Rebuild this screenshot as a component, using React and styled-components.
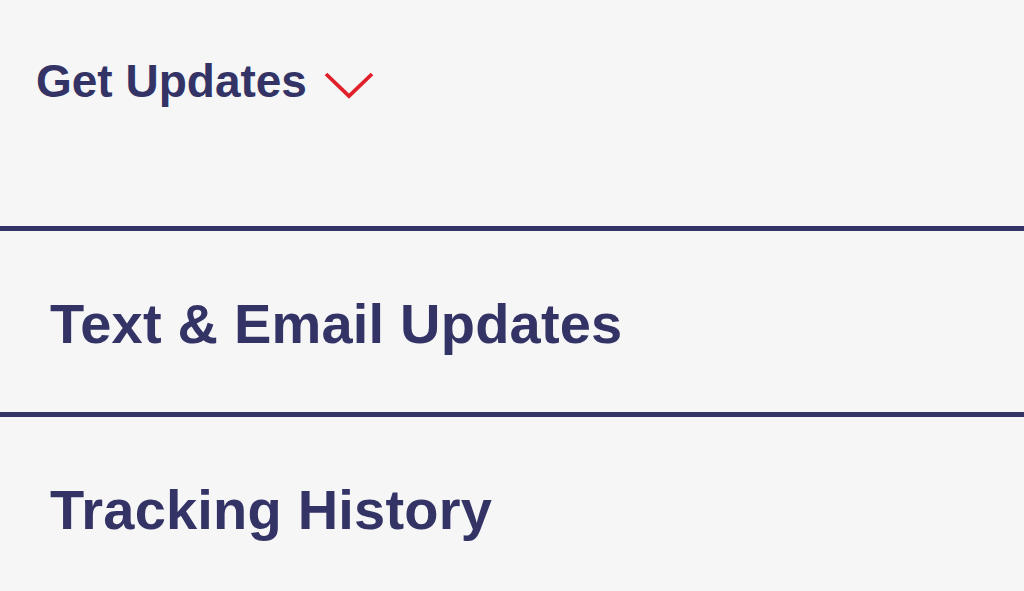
import React from 'react'
import styled, { createGlobalStyle } from 'styled-components'

const GlobalStyle = createGlobalStyle`
  html, body {
    margin: 0;
    padding: 0;
    background: #f6f6f7;
    overflow: hidden;
  }
  body {
    font-family: "Liberation Sans", Arial, sans-serif;
  }
`

const Page = styled.div`
  width: 1024px;
  height: 591px;
  background: #f6f6f7;
  color: #333366;
`

const Header = styled.div`
  box-sizing: border-box;
  height: 226px;
  padding: 54px 0 0 36px;
  display: flex;
  align-items: flex-start;
  gap: 16px;
`

const HeaderTitle = styled.span`
  font-size: 46px;
  font-weight: 700;
  line-height: normal;
`

const Chevron = styled.svg`
  margin-top: 17px;
  flex: none;
`

const Divider = styled.div`
  height: 5px;
  background: #333366;
`

const Row = styled.div`
  box-sizing: border-box;
  height: 181px;
  padding: 3px 0 0 50px;
  display: flex;
  align-items: center;
  font-size: 56px;
  font-weight: 700;
  letter-spacing: 0.2px;
`

const App = () => {
  return (
    <Page>
      <GlobalStyle />
      <Header>
        <HeaderTitle>Get Updates</HeaderTitle>
        <Chevron width="52" height="28" viewBox="0 0 52 28">
          <path d="M3 3 L26 25 L49 3" fill="none" stroke="#e0202a" strokeWidth="3.8" />
        </Chevron>
      </Header>
      <Divider />
      <Row>Text &amp; Email Updates</Row>
      <Divider />
      <Row>Tracking History</Row>
    </Page>
  )
}

export default App
